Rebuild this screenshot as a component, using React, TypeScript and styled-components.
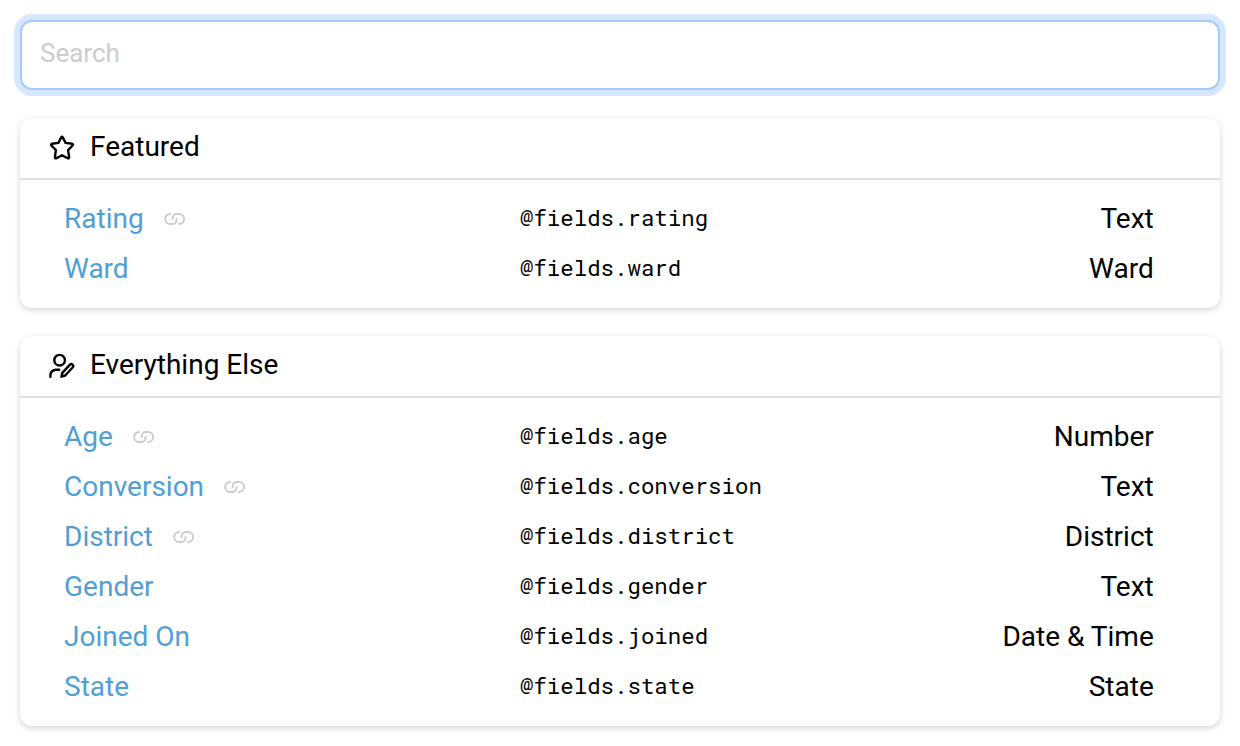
import React from "react";
import styled, { createGlobalStyle } from "styled-components";

const GlobalStyle = createGlobalStyle`
  * { box-sizing: border-box; }
  body { margin: 0; background: #fff; color: #000; font-family: Roboto, sans-serif; font-size: 28px; }
`;

const Page = styled.main`
  display: flex;
  flex-direction: column;
  gap: 28px;
  padding: 20px;
`;

const SearchInput = styled.input`
  width: 100%;
  height: 70px;
  padding: 0 18px 4px;
  border: 2px solid #a4caff;
  border-radius: 12px;
  outline: none;
  background: #fff;
  box-shadow: 0 0 0 6px #d7e7ff;
  color: #000;
  font: 400 26px Roboto, sans-serif;
  &::placeholder { color: #ccc; opacity: 1; }
`;

const Card = styled.section`
  border-radius: 12px;
  background: #fff;
  box-shadow: 0 0 2px rgba(0, 0, 0, 0.02), 0 2px 6px rgba(0, 0, 0, 0.17);
`;

const CardHeader = styled.header`
  display: flex;
  align-items: center;
  gap: 14px;
  height: 62px;
  padding: 0 28px 4px;
  border-bottom: 2px solid #e0e0e0;
`;

const HeaderIcon = styled.svg`
  width: 28px;
  height: 28px;
  margin-top: 3px;
  flex: none;
  fill: none;
  stroke: #000;
  stroke-width: 2.4;
  stroke-linecap: round;
  stroke-linejoin: round;
`;

const Rows = styled.div`
  padding: 13px 66.25px 15px 44px;
`;

const Row = styled.div`
  display: grid;
  grid-template-columns: 456px 1fr auto;
  align-items: center;
  height: 50px;
`;

const Name = styled.div`
  display: flex;
  align-items: center;
  gap: 19.3px;
  color: #4f9fd6;
`;

const LinkIcon = styled.svg`
  width: 22px;
  height: 22px;
  margin-top: 2px;
  fill: none;
  stroke: #ccc;
  stroke-width: 1.9;
  stroke-linecap: round;
  stroke-linejoin: round;
`;

const Key = styled.code`
  padding-bottom: 2px;
  font-family: "Roboto Mono", "Liberation Mono", monospace;
  font-size: 22.4px;
`;

const Type = styled.div`
  text-align: right;
`;

interface Field {
  name: string;
  id: string;
  type: string;
  linked?: boolean;
}

const featured: Field[] = [
  { name: "Rating", id: "rating", type: "Text", linked: true },
  { name: "Ward", id: "ward", type: "Ward" },
];

const others: Field[] = [
  { name: "Age", id: "age", type: "Number", linked: true },
  { name: "Conversion", id: "conversion", type: "Text", linked: true },
  { name: "District", id: "district", type: "District", linked: true },
  { name: "Gender", id: "gender", type: "Text" },
  { name: "Joined On", id: "joined", type: "Date & Time" },
  { name: "State", id: "state", type: "State" },
];

const Star = () => (
  <HeaderIcon viewBox="0 0 28 28">
    <path d="M13.2 3.4Q14 2.2 14.8 3.4L17.6 8.9L24.1 9.8Q25.6 10.3 24.6 11.5L20.1 16.1L21.1 23.1Q21.1 24.8 19.7 24.3L14 21.2L8.3 24.3Q6.9 24.8 6.9 23.1L7.9 16.1L3.4 11.5Q2.4 10.3 3.9 9.8L10.4 8.9Z" />
  </HeaderIcon>
);

const UserEdit = () => (
  <HeaderIcon viewBox="0 0 28 28">
    <circle cx="11.6" cy="8.2" r="5.3" />
    <path d="M2.4 24.8V23.6Q2.6 18 8.1 17.7H11.2" />
    <path d="M13.4 24.7L14.3 20.8L22 12.7Q23.2 11.5 24.5 12.6Q25.9 13.9 24.8 15.2L17.2 23.5Z" />
  </HeaderIcon>
);

const Link = () => (
  <LinkIcon viewBox="0 0 22 22">
    <path d="M7.2 6H7.1A5 5 0 0 0 7.1 16H9.5A4 4 0 0 0 13.5 12V10.8" />
    <path d="M16 16H16.1A5 5 0 0 0 16.1 6H13.7A4 4 0 0 0 9.7 10V11.2" />
  </LinkIcon>
);

const FieldCard = ({ title, icon, fields }: { title: string; icon: React.ReactNode; fields: Field[] }) => (
  <Card>
    <CardHeader>
      {icon}
      <span>{title}</span>
    </CardHeader>
    <Rows>
      {fields.map((f) => (
        <Row key={f.id}>
          <Name>
            <span>{f.name}</span>
            {f.linked && <Link />}
          </Name>
          <Key>@fields.{f.id}</Key>
          <Type>{f.type}</Type>
        </Row>
      ))}
    </Rows>
  </Card>
);

export default function App() {
  return (
    <>
      <GlobalStyle />
      <Page>
        <SearchInput placeholder="Search" />
        <FieldCard title="Featured" icon={<Star />} fields={featured} />
        <FieldCard title="Everything Else" icon={<UserEdit />} fields={others} />
      </Page>
    </>
  );
}
